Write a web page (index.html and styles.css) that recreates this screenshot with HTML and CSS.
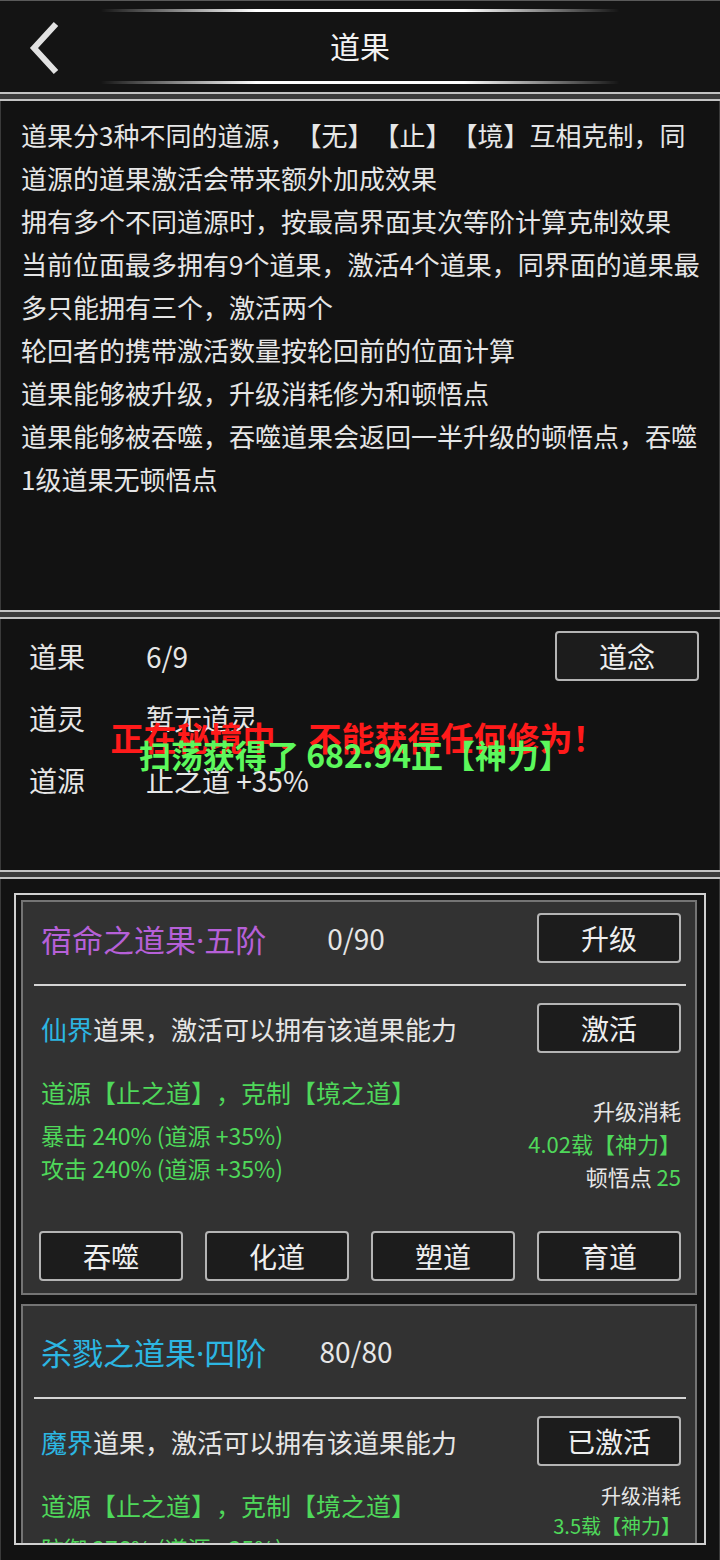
FILE: index.html
```html
<!DOCTYPE html>
<html lang="zh-CN">
<head>
    <meta charset="UTF-8">
    <meta name="viewport" content="width=device-width, initial-scale=1.0">
    <title>道果</title>
    <link rel="stylesheet" href="styles.css">
</head>
<body>
    <header class="topbar">
        <span class="glow glow-top"></span>
        <a class="back" href="#">
            <svg width="40" height="56" viewBox="0 0 40 56">
                <polyline points="32,4 10,28 32,52" fill="none" stroke="#e2e2e2" stroke-width="6"/>
            </svg>
        </a>
        <h1>道果</h1>
        <span class="glow glow-bottom"></span>
    </header>
    <div class="sep"></div>

    <section class="desc">
        <p>道果分3种不同的道源，【无】【止】【境】互相克制，同<br>道源的道果激活会带来额外加成效果</p>
        <p>拥有多个不同道源时，按最高界面其次等阶计算克制效果</p>
        <p>当前位面最多拥有9个道果，激活4个道果，同界面的道果最<br>多只能拥有三个，激活两个</p>
        <p>轮回者的携带激活数量按轮回前的位面计算</p>
        <p>道果能够被升级，升级消耗修为和顿悟点</p>
        <p>道果能够被吞噬，吞噬道果会返回一半升级的顿悟点，吞噬<br>1级道果无顿悟点</p>
    </section>
    <div class="sep"></div>

    <section class="info">
        <div class="info-row">
            <span class="info-label">道果</span>
            <span class="info-value">6/9</span>
            <button class="btn">道念</button>
        </div>
        <div class="info-row">
            <span class="info-label">道灵</span>
            <span class="info-value">暂无道灵</span>
        </div>
        <div class="info-row">
            <span class="info-label">道源</span>
            <span class="info-value">止之道 +35%</span>
        </div>
        <div class="toast toast-red">正在秘境中，不能获得任何修为！</div>
        <div class="toast toast-green">扫荡获得了 682.94正【神力】</div>
    </section>
    <div class="sep"></div>

    <section class="list">
        <div class="frame">
            <div class="card">
                <div class="card-head">
                    <span class="card-name purple">宿命之道果·五阶</span>
                    <span class="card-count">0/90</span>
                    <button class="btn">升级</button>
                </div>
                <div class="divider"></div>
                <div class="card-row">
                    <span class="realm"><span class="cyan">仙界</span>道果，激活可以拥有该道果能力</span>
                    <button class="btn">激活</button>
                </div>
                <div class="card-body">
                    <div class="effects">
                        <div class="source">道源【止之道】，克制【境之道】</div>
                        <div class="stats">
                            <div>暴击 240% (道源 +35%)</div>
                            <div>攻击 240% (道源 +35%)</div>
                        </div>
                    </div>
                    <div class="cost">
                        <div>升级消耗</div>
                        <div class="green">4.02载【神力】</div>
                        <div>顿悟点 <span class="green">25</span></div>
                    </div>
                </div>
                <div class="actions">
                    <button class="btn">吞噬</button>
                    <button class="btn">化道</button>
                    <button class="btn">塑道</button>
                    <button class="btn">育道</button>
                </div>
            </div>

            <div class="card">
                <div class="card-head plain">
                    <span class="card-name cyan">杀戮之道果·四阶</span>
                    <span class="card-count">80/80</span>
                </div>
                <div class="divider"></div>
                <div class="card-row">
                    <span class="realm"><span class="cyan">魔界</span>道果，激活可以拥有该道果能力</span>
                    <button class="btn">已激活</button>
                </div>
                <div class="card-body">
                    <div class="effects">
                        <div class="source">道源【止之道】，克制【境之道】</div>
                        <div class="stats">
                            <div>防御 276% (道源 +35%)</div>
                            <div>生命 276% (道源 +35%)</div>
                        </div>
                    </div>
                    <div class="cost small">
                        <div>升级消耗</div>
                        <div class="green">3.5载【神力】</div>
                        <div>顿悟点 <span class="green">20</span></div>
                    </div>
                </div>
            </div>
        </div>
    </section>
</body>
</html>
```

FILE: styles.css
```css
body {
    font-family: "Noto Sans CJK SC", "Noto Sans", sans-serif;
    margin: 0;
    padding: 0;
    width: 720px;
    height: 1560px;
    overflow: hidden;
    background-color: #0e0e0e;
    color: #e6e6e6;
    text-spacing-trim: space-all;
}
.topbar {
    position: relative;
    height: 92px;
    box-sizing: border-box;
    border-top: 1px solid #5a5a5a;
    padding-bottom: 4px;
    background: #141414;
    display: flex;
    align-items: center;
    justify-content: center;
}
.topbar h1 {
    margin: 0;
    font-size: 30px;
    font-weight: normal;
    color: #f2f2f2;
}
.back {
    position: absolute;
    left: 24px;
    top: 19px;
}
.glow {
    position: absolute;
    left: 100px;
    right: 100px;
    height: 3px;
    background: linear-gradient(90deg, rgba(255,255,255,0), #fff 30%, #fff 70%, rgba(255,255,255,0));
    filter: blur(0.6px);
}
.glow-top {
    top: 8px;
}
.glow-bottom {
    top: 80px;
}
.sep {
    height: 5px;
    border-top: 2px solid #c4c4c4;
    border-bottom: 2px solid #c4c4c4;
    background: #3c3c3c;
}
.desc {
    height: 509px;
    box-sizing: border-box;
    padding: 12px 4px 0 20px;
    background: #121212;
    border-left: 1px solid #3a3a3a;
    border-right: 1px solid #3a3a3a;
    font-size: 26px;
    line-height: 43px;
    white-space: nowrap;
}
.desc p {
    margin: 0;
}
.info {
    position: relative;
    height: 251px;
    box-sizing: border-box;
    padding: 12px 20px 0 28px;
    background: #121212;
    border-left: 1px solid #3a3a3a;
    border-right: 1px solid #3a3a3a;
    font-size: 28px;
}
.info-row {
    display: flex;
    align-items: center;
    height: 50px;
    margin-bottom: 12px;
}
.info-label {
    width: 117px;
}
.info-value {
    flex: 1;
}
.toast {
    position: absolute;
    left: 0;
    right: 0;
    text-align: center;
    font-weight: bold;
    white-space: nowrap;
}
.toast-red {
    top: 94px;
    left: -4px;
    font-size: 33px;
    color: #ff1a1a;
}
.toast-green {
    top: 112px;
    left: -10px;
    font-size: 32px;
    color: #5cf85c;
}
.btn {
    width: 144px;
    height: 50px;
    padding: 0;
    background: #1c1c1c;
    color: #eeeeee;
    border: 2px solid #b4b4b4;
    border-radius: 4px;
    font-family: inherit;
    font-size: 28px;
    cursor: pointer;
}
.list {
    height: 681px;
    box-sizing: border-box;
    padding: 14px 13px 0 13px;
    background: #121212;
    border-left: 1px solid #3a3a3a;
    border-right: 1px solid #3a3a3a;
}
.frame {
    height: 652px;
    box-sizing: border-box;
    border: 2px solid #d0d0d0;
    padding: 5px 7px 0 5px;
    background: #141414;
    overflow: hidden;
}
.card {
    background: #323232;
    border: 2px solid #747474;
    padding: 0 14px 12px 18px;
    margin-bottom: 9px;
}
.card-head {
    display: flex;
    align-items: center;
    height: 72px;
    box-sizing: border-box;
}
.card-head.plain {
    height: 81px;
    padding-top: 9px;
}
.card-name {
    width: 255px;
    font-family: "Noto Sans", "Noto Sans CJK SC", sans-serif;
    font-size: 31px;
    white-space: nowrap;
}
.card-count {
    width: 120px;
    text-align: center;
    font-size: 28px;
}
.card-head .btn {
    margin-left: auto;
}
.divider {
    height: 2px;
    background: #d4d4d4;
    margin: 10px -5px 0 -7px;
}
.card-row {
    display: flex;
    align-items: center;
    justify-content: space-between;
    margin-top: 17px;
    font-size: 26px;
}
.card-body {
    display: flex;
    justify-content: space-between;
    margin-top: 22px;
}
.source {
    font-size: 25px;
    line-height: 34px;
    color: #4fd85a;
}
.stats {
    margin-top: 10px;
    font-size: 23px;
    line-height: 33px;
    color: #4fd85a;
}
.cost {
    margin-top: 19px;
    font-size: 22px;
    line-height: 33px;
    text-align: right;
}
.cost.small {
    margin-top: -7px;
    font-size: 20px;
    line-height: 30px;
}
.actions {
    display: flex;
    justify-content: space-between;
    margin: 38px 0 0 -2px;
}
.green {
    color: #4fd85a;
}
.purple {
    color: #b660d8;
}
.cyan {
    color: #2cb6e2;
}
```
